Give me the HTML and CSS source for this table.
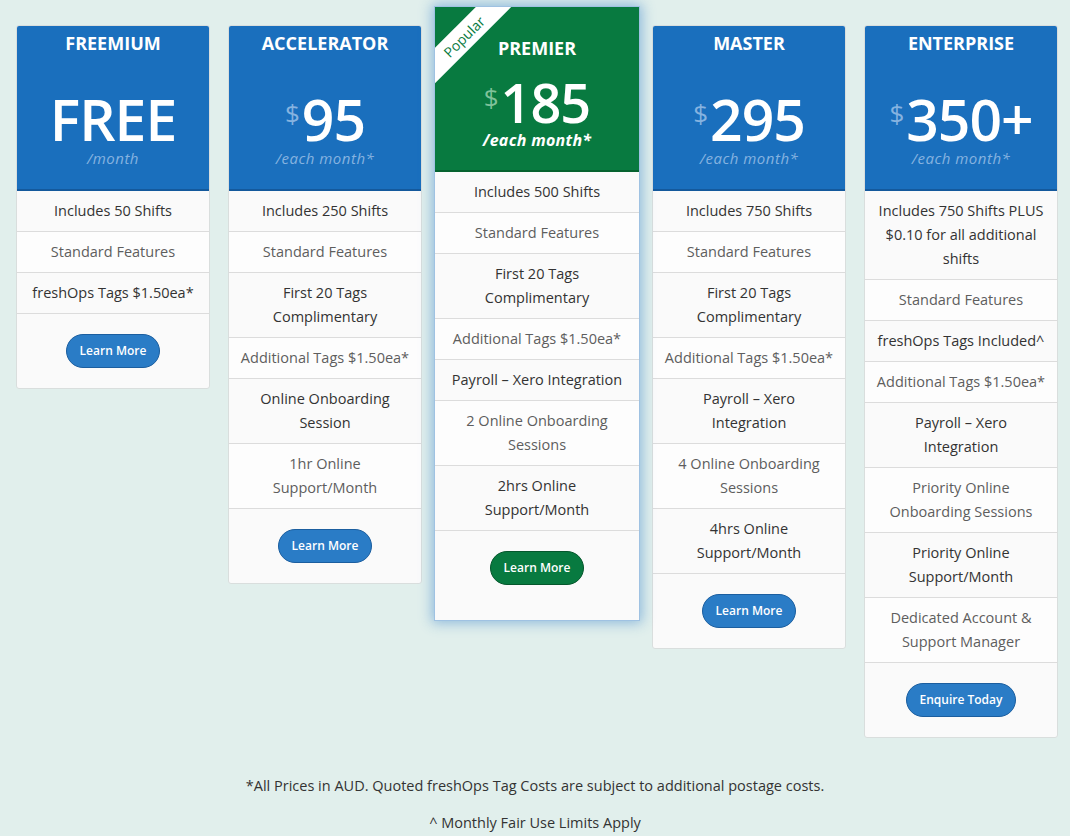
FILE: index.html
```html
<!DOCTYPE html>
<html lang="en">
<head>
<meta charset="utf-8">
<title>freshOps Pricing</title>
<link rel="stylesheet" href="styles.css">
</head>
<body>
<main class="pricing">
  <div class="plans">
    <section class="plan">
      <header class="plan-head">
        <h2 class="plan-name">FREEMIUM</h2>
        <div class="price"><span class="amount">FREE</span></div>
        <div class="period">/month</div>
      </header>
      <ul class="features">
        <li>Includes 50 Shifts</li>
        <li>Standard Features</li>
        <li>freshOps Tags $1.50ea*</li>
      </ul>
      <div class="plan-foot"><a class="btn" href="#">Learn More</a></div>
    </section>

    <section class="plan">
      <header class="plan-head">
        <h2 class="plan-name">ACCELERATOR</h2>
        <div class="price"><span class="currency">$</span><span class="amount">95</span></div>
        <div class="period">/each month*</div>
      </header>
      <ul class="features">
        <li>Includes 250 Shifts</li>
        <li>Standard Features</li>
        <li>First 20 Tags Complimentary</li>
        <li>Additional Tags $1.50ea*</li>
        <li>Online Onboarding Session</li>
        <li>1hr Online Support/Month</li>
      </ul>
      <div class="plan-foot"><a class="btn" href="#">Learn More</a></div>
    </section>

    <section class="plan plan-featured">
      <header class="plan-head">
        <div class="ribbon">Popular</div>
        <h2 class="plan-name">PREMIER</h2>
        <div class="price"><span class="currency">$</span><span class="amount">185</span></div>
        <div class="period">/each month*</div>
      </header>
      <ul class="features">
        <li>Includes 500 Shifts</li>
        <li>Standard Features</li>
        <li>First 20 Tags Complimentary</li>
        <li>Additional Tags $1.50ea*</li>
        <li>Payroll – Xero Integration</li>
        <li>2 Online Onboarding Sessions</li>
        <li>2hrs Online Support/Month</li>
      </ul>
      <div class="plan-foot"><a class="btn" href="#">Learn More</a></div>
    </section>

    <section class="plan">
      <header class="plan-head">
        <h2 class="plan-name">MASTER</h2>
        <div class="price"><span class="currency">$</span><span class="amount">295</span></div>
        <div class="period">/each month*</div>
      </header>
      <ul class="features">
        <li>Includes 750 Shifts</li>
        <li>Standard Features</li>
        <li>First 20 Tags Complimentary</li>
        <li>Additional Tags $1.50ea*</li>
        <li>Payroll – Xero Integration</li>
        <li>4 Online Onboarding Sessions</li>
        <li>4hrs Online Support/Month</li>
      </ul>
      <div class="plan-foot"><a class="btn" href="#">Learn More</a></div>
    </section>

    <section class="plan">
      <header class="plan-head">
        <h2 class="plan-name">ENTERPRISE</h2>
        <div class="price"><span class="currency">$</span><span class="amount">350+</span></div>
        <div class="period">/each month*</div>
      </header>
      <ul class="features">
        <li>Includes 750 Shifts PLUS $0.10 for all additional shifts</li>
        <li>Standard Features</li>
        <li>freshOps Tags Included^</li>
        <li>Additional Tags $1.50ea*</li>
        <li>Payroll – Xero Integration</li>
        <li>Priority Online Onboarding Sessions</li>
        <li>Priority Online Support/Month</li>
        <li>Dedicated Account &amp; Support Manager</li>
      </ul>
      <div class="plan-foot"><a class="btn" href="#">Enquire Today</a></div>
    </section>
  </div>

  <div class="notes">
    <p>*All Prices in AUD. Quoted freshOps Tag Costs are subject to additional postage costs.</p>
    <p>^ Monthly Fair Use Limits Apply</p>
  </div>
</main>
</body>
</html>
```

FILE: styles.css
```css
* { box-sizing: border-box; }

html, body {
  margin: 0;
  padding: 0;
}

body {
  background: #e1efec;
  font-family: "Open Sans", "Liberation Sans", sans-serif;
  color: #333;
  width: 1070px;
  height: 836px;
  overflow: hidden;
}

.plans {
  display: flex;
  align-items: flex-start;
  gap: 18px;
  padding: 25px 0 0 16px;
}

.plan {
  width: 194px;
  flex: 0 0 194px;
  background: #fafafa;
  border: 1px solid #d9dedd;
  border-radius: 3px;
  overflow: hidden;
}

.plan-head {
  position: relative;
  background: #1a6fbd;
  border-bottom: 2px solid #14599c;
  color: #fff;
  text-align: center;
  height: 165px;
  padding-top: 5px;
  overflow: hidden;
}

.plan-name {
  margin: 0;
  font-size: 18px;
  line-height: 24px;
  font-weight: 700;
}

.price {
  margin-top: 35px;
  height: 58px;
  display: flex;
  justify-content: center;
  align-items: flex-start;
}

.amount {
  font-size: 57px;
  line-height: 58px;
  font-weight: 600;
  letter-spacing: -1px;
}

.currency {
  font-size: 26px;
  line-height: 26px;
  margin-top: 10px;
  margin-right: 2px;
  color: #86b3e0;
}

.period {
  font-size: 15px;
  line-height: 20px;
  font-style: italic;
  color: #86b3e0;
  letter-spacing: 0.5px;
}

.features {
  list-style: none;
  margin: 0;
  padding: 0;
}

.features li {
  padding: 8px 11.5px;
  font-size: 14.5px;
  line-height: 24px;
  text-align: center;
  border-bottom: 1px solid #dcdcdc;
  color: #333;
  background: #fafafa;
}

.features li:nth-child(even) {
  color: #5e5e5e;
  background: #fdfdfd;
}

.plan-foot {
  display: flex;
  justify-content: center;
  padding: 20px 0 20px;
}

.btn {
  display: inline-block;
  background: #2a7cc6;
  border: 1px solid #1b5e9f;
  color: #fff;
  font-size: 12px;
  font-weight: 600;
  line-height: 32px;
  height: 34px;
  padding: 0 13px;
  border-radius: 17px;
  text-decoration: none;
}

/* Featured plan */
.plan-featured {
  width: 206px;
  flex: 0 0 206px;
  margin: -19px -6px 0;
  border: 1px solid #9fc2e2;
  border-radius: 0;
  box-shadow: 0 0 12px 2px rgba(40, 120, 200, 0.45);
  position: relative;
  z-index: 1;
}

.plan-featured .plan-head {
  background: #087a40;
  border-bottom: 2px solid #06622f;
  padding-top: 29px;
}

.plan-featured .price {
  margin-top: 14px;
  height: 56px;
}

.plan-featured .amount {
  font-size: 54px;
  line-height: 56px;
}

.plan-featured .currency {
  color: #7fc29a;
  margin-top: 10px;
}

.plan-featured .period {
  color: #fff;
  font-weight: 700;
  font-size: 16px;
  letter-spacing: 0.3px;
}

.plan-featured .plan-foot {
  padding: 20px 0 35px;
}

.plan-featured .btn {
  background: #087a40;
  border-color: #05572c;
}

.ribbon {
  position: absolute;
  width: 120px;
  left: -31px;
  top: 17px;
  transform: rotate(-45deg);
  background: #fff;
  color: #087a40;
  font-size: 14px;
  line-height: 25px;
  text-align: center;
}

.notes {
  text-align: center;
  font-size: 14.5px;
  color: #333;
  padding-top: 36px;
}

.notes p {
  margin: 0 0 13px;
  line-height: 24px;
}
```
